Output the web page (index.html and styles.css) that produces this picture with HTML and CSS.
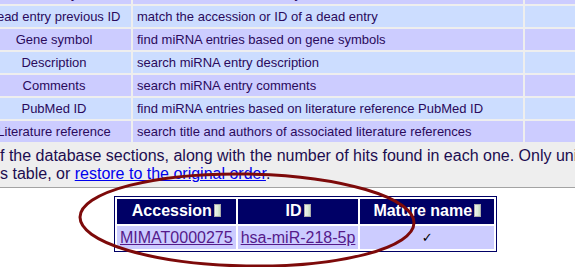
FILE: index.html
```
<html>

<head>
    <link rel="stylesheet" href="styles.css">
    <title>miRBase search results</title>
</head>

<body>
    <div class="searchbox">
        <table class="fields">
            <colgroup>
                <col class="fieldname">
                <col class="fielddesc">
                <col class="fieldhits">
            </colgroup>
            <tr class="odd">
                <td class="name">Dead entry ID</td>
                <td>match the ID of a dead entry</td>
                <td></td>
            </tr>
            <tr class="even">
                <td class="name">Dead entry previous ID</td>
                <td>match the accession or ID of a dead entry</td>
                <td></td>
            </tr>
            <tr class="odd">
                <td class="name">Gene symbol</td>
                <td>find miRNA entries based on gene symbols</td>
                <td></td>
            </tr>
            <tr class="even">
                <td class="name">Description</td>
                <td>search miRNA entry description</td>
                <td></td>
            </tr>
            <tr class="odd">
                <td class="name">Comments</td>
                <td>search miRNA entry comments</td>
                <td></td>
            </tr>
            <tr class="even">
                <td class="name">PubMed ID</td>
                <td>find miRNA entries based on literature reference PubMed ID</td>
                <td></td>
            </tr>
            <tr class="odd">
                <td class="name">Literature reference</td>
                <td>search title and authors of associated literature references</td>
                <td></td>
            </tr>
        </table>

        <p class="summary">
            f the database sections, along with the number of hits found in each one. Only unique hits are listed<br>
            s table, or <a href="#" class="plain">restore to the original order</a>.
        </p>
    </div>

    <table class="results">
        <tr>
            <th>Accession<svg class="sorter" width="7" height="13" viewBox="0 0 7 13"><defs><linearGradient id="sg" x1="0" y1="0" x2="1" y2="0"><stop offset="0" stop-color="#f6f6f6"/><stop offset="1" stop-color="#c4dbbf"/></linearGradient></defs><rect x="0.5" y="0.5" width="6" height="12" fill="url(#sg)" stroke="#ababab"/><rect x="2" y="2" width="2" height="9" fill="#e2eedf"/></svg></th>
            <th>ID<svg class="sorter" width="7" height="13" viewBox="0 0 7 13"><rect x="0.5" y="0.5" width="6" height="12" fill="url(#sg)" stroke="#ababab"/><rect x="2" y="2" width="2" height="9" fill="#e2eedf"/></svg></th>
            <th>Mature name<svg class="sorter" width="7" height="13" viewBox="0 0 7 13"><rect x="0.5" y="0.5" width="6" height="12" fill="url(#sg)" stroke="#ababab"/><rect x="2" y="2" width="2" height="9" fill="#e2eedf"/></svg></th>
        </tr>
        <tr>
            <td><a href="#">MIMAT0000275</a></td>
            <td><a href="#">hsa-miR-218-5p</a></td>
            <td class="tick">&#10003;</td>
        </tr>
    </table>

    <!-- hand drawn highlight over the result table -->
    <svg class="scribble" width="575" height="267" viewBox="0 0 575 267">
        <ellipse cx="247" cy="220" rx="167" ry="46" transform="rotate(1 247 220)"
            fill="none" stroke="#7d0a0a" stroke-width="3" />
    </svg>
</body>

</html>
```

FILE: styles.css
```
body {
    margin: 0;
    overflow: hidden;
    font-family: "Liberation Sans", Arial, sans-serif;
    color: #2a0a5c;
    background: #fff;
}

a {
    color: #551a8b;
}

a.plain {
    color: #0000ee;
}

.searchbox {
    background: #eeeeee;
    border-bottom: 1px solid #a3a3a3;
    margin-top: -19px;
    padding-bottom: 4px;
}

.fields {
    table-layout: fixed;
    border-spacing: 2px;
    margin-left: -25px;
    width: 652px;
    font-size: 13px;
    line-height: 15px;
}

.fields col.fieldname {
    width: 154px;
}

.fields col.fielddesc {
    width: 390px;
}

.fields col.fieldhits {
    width: 100px;
}

.fields td {
    padding: 3px 4px;
    white-space: nowrap;
    overflow: visible;
}

.fields td.name {
    text-align: center;
}

.fields tr.odd td {
    background: #ccccff;
}

.fields tr.even td {
    background: #ccddff;
}

.summary {
    margin: 3px 0 0 0;
    font-size: 16px;
    line-height: 18px;
    white-space: nowrap;
    color: #1c0d50;
}

.results {
    margin: 8px 0 0 114px;
    border: 1px solid #000066;
    border-spacing: 2px;
    font-size: 16px;
    line-height: 18px;
}

.results th {
    background: #000066;
    color: #fff;
    font-weight: bold;
    padding: 3px 13px 4px;
    white-space: nowrap;
}

.results td {
    background: #ccccff;
    padding: 3px 3px 2px;
    text-align: center;
    white-space: nowrap;
}

.results td.tick {
    color: #000;
    font-family: "DejaVu Sans", sans-serif;
    font-size: 13px;
    font-weight: bold;
}

.sorter {
    margin-left: 2px;
    vertical-align: -1px;
}

.scribble {
    position: absolute;
    left: 0;
    top: 0;
    pointer-events: none;
}
```
